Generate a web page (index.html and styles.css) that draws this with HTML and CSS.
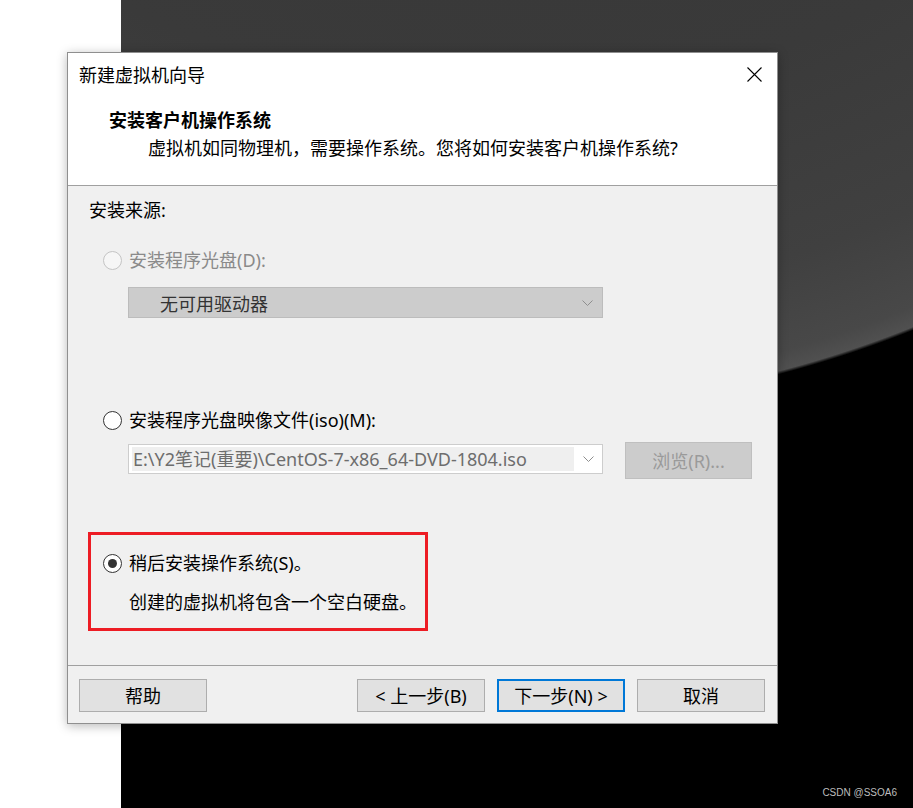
FILE: index.html
```html
<!DOCTYPE html>
<html lang="zh-CN">

<head>
    <meta charset="UTF-8">
    <meta name="viewport" content="width=device-width, initial-scale=1.0">
    <title>新建虚拟机向导</title>
    <link rel="stylesheet" href="styles.css">
</head>

<body>
    <div class="screen">
        <!-- 左侧白色区域 + 桌面背景 -->
        <div class="strip"></div>
        <div class="desktop"></div>

        <!-- 向导窗口 -->
        <div class="wizard">
            <div class="wizard-head">
                <div class="titlebar">
                    <span class="title">新建虚拟机向导</span>
                    <button class="close" aria-label="关闭">
                        <svg width="15" height="15" viewBox="0 0 15 15">
                            <path d="M0.5 0.5 L14.5 14.5 M14.5 0.5 L0.5 14.5" stroke="#000" stroke-width="1.1" fill="none" />
                        </svg>
                    </button>
                </div>
                <h2 class="step-title">安装客户机操作系统</h2>
                <p class="step-desc">虚拟机如同物理机，需要操作系统。您将如何安装客户机操作系统?</p>
            </div>

            <div class="wizard-body">
                <div class="group-label">安装来源:</div>

                <label class="option disabled">
                    <span class="radio"></span>
                    <span>安装程序光盘(D):</span>
                </label>
                <div class="select disabled">
                    <span class="select-text">无可用驱动器</span>
                    <svg class="chevron" width="11" height="6" viewBox="0 0 11 6">
                        <path d="M0.5 0.5 L5.5 5.5 L10.5 0.5" stroke="#8e8e8e" fill="none" />
                    </svg>
                </div>

                <label class="option option-iso">
                    <span class="radio"></span>
                    <span>安装程序光盘映像文件(iso)(M):</span>
                </label>
                <div class="iso-row">
                    <div class="combo">
                        <span class="combo-field">E:\Y2笔记(重要)\CentOS-7-x86_64-DVD-1804.iso</span>
                        <span class="combo-arrow">
                            <svg width="11" height="6" viewBox="0 0 11 6">
                                <path d="M0.5 0.5 L5.5 5.5 L10.5 0.5" stroke="#8e8e8e" fill="none" />
                            </svg>
                        </span>
                    </div>
                    <button class="btn btn-disabled">浏览(R)...</button>
                </div>

                <div class="later-box">
                    <label class="option">
                        <span class="radio checked"></span>
                        <span>稍后安装操作系统(S)。</span>
                    </label>
                    <p class="later-note">创建的虚拟机将包含一个空白硬盘。</p>
                </div>
            </div>

            <div class="wizard-foot">
                <button class="btn">帮助</button>
                <button class="btn btn-back">&lt; 上一步(B)</button>
                <button class="btn btn-default">下一步(N) &gt;</button>
                <button class="btn">取消</button>
            </div>
        </div>

        <div class="watermark">CSDN @SSOA6</div>
    </div>
</body>

</html>
```

FILE: styles.css
```css
/* 页面基础 */
body {
    margin: 0;
    font-family: "Noto Sans", "Noto Sans CJK SC", sans-serif;
    font-size: 18px;
    color: #000;
}

.screen {
    position: relative;
    width: 913px;
    height: 808px;
    display: flex;
    overflow: hidden;
}

.strip {
    width: 121px;
    background-color: #fff;
}

/* 桌面壁纸: 上方灰色弧面, 下方黑色 */
.desktop {
    flex: 1;
    background: radial-gradient(circle 1110px at 379px -700px,
            #333 0%,
            #3a3a3a 72%,
            #404040 90%,
            #484848 98%,
            #505050 99.7%,
            #000 100%);
}

/* 向导窗口 */
.wizard {
    position: absolute;
    left: 67px;
    top: 52px;
    width: 711px;
    height: 672px;
    box-sizing: border-box;
    border: 1px solid #8f8f8f;
    background-color: #f0f0f0;
    box-shadow: 0 2px 10px rgba(0, 0, 0, 0.28);
    display: flex;
    flex-direction: column;
}

.wizard-head {
    height: 132px;
    background-color: #fff;
    border-bottom: 1px solid #a0a0a0;
}

.titlebar {
    height: 44px;
    display: flex;
    align-items: center;
    justify-content: space-between;
    padding: 0 15px 0 11px;
}

.title {
    line-height: 24px;
}

.close {
    border: none;
    background: none;
    padding: 0;
    width: 15px;
    height: 15px;
    display: flex;
    margin-top: -1px;
}

.step-title {
    margin: 11px 0 0 41px;
    font-size: 18px;
    line-height: 24px;
    font-weight: bold;
}

.step-desc {
    margin: 4px 0 0 80px;
    line-height: 24px;
}

/* 主体 */
.wizard-body {
    height: 479px;
    box-sizing: border-box;
    padding: 12px 0 0 20px;
}

.group-label {
    line-height: 24px;
    padding-left: 1px;
}

.option {
    display: flex;
    align-items: center;
    gap: 7px;
    line-height: 24px;
    margin: 26px 0 0 15px;
}

.option.disabled {
    color: #8a8a8a;
}

.option-iso {
    margin-top: 90px;
}

.radio {
    width: 19px;
    height: 19px;
    box-sizing: border-box;
    border: 1px solid #333;
    border-radius: 50%;
    background-color: #fff;
    display: flex;
    align-items: center;
    justify-content: center;
}

.option.disabled .radio {
    border-color: #c4c4c4;
    background-color: #f6f6f6;
}

.radio.checked::after {
    content: "";
    width: 9px;
    height: 9px;
    border-radius: 50%;
    background-color: #333;
}

/* 下拉框 */
.select {
    width: 475px;
    height: 31px;
    box-sizing: border-box;
    margin: 15px 0 0 40px;
    border: 1px solid #bcbcbc;
    background-color: #cccccc;
    display: flex;
    align-items: center;
    justify-content: space-between;
    padding: 0 9px 0 31px;
    color: #333;
}

.chevron {
    margin-top: 1px;
}

.iso-row {
    display: flex;
    align-items: flex-start;
    margin: 10px 0 0 40px;
}

.combo {
    width: 475px;
    height: 30px;
    box-sizing: border-box;
    margin-top: 2px;
    border: 1px solid #cdcdcd;
    background-color: #fff;
    padding: 2px 0 2px 3px;
    display: flex;
}

.combo-field {
    flex: 1;
    background-color: #efefef;
    color: #6d6d6d;
    line-height: 24px;
    padding-left: 1px;
    white-space: nowrap;
    overflow: hidden;
}

.combo-arrow {
    width: 28px;
    display: flex;
    align-items: center;
    justify-content: center;
}

/* 按钮 */
.btn {
    font-family: inherit;
    font-size: 18px;
    width: 128px;
    height: 33px;
    padding: 0;
    border: 1px solid #adadad;
    background-color: #e1e1e1;
    color: #000;
    line-height: 24px;
}

.btn-disabled {
    width: 127px;
    height: 37px;
    margin-left: 22px;
    border-color: #bfbfbf;
    background-color: #cccccc;
    color: #9a9a9a;
}

.btn-default {
    border: 2px solid #0078d7;
}

/* 红框标注 */
.later-box {
    width: 340px;
    box-sizing: border-box;
    margin-top: 53px;
    border: 3px solid #ed1c24;
    padding: 16px 0 14px 12px;
}

.later-box .option {
    margin: 0;
}

.later-note {
    margin: 15px 0 0 26px;
    line-height: 24px;
}

/* 底部按钮栏 */
.wizard-foot {
    flex: 1;
    border-top: 1px solid #a0a0a0;
    display: flex;
    align-items: flex-start;
    gap: 12px;
    padding: 13px 12px 0 11px;
}

.btn-back {
    margin-left: auto;
}

.watermark {
    position: absolute;
    right: 16px;
    bottom: 8px;
    font-family: "Liberation Sans", sans-serif;
    font-size: 10px;
    line-height: 14px;
    color: #bdbdbd;
}
```
